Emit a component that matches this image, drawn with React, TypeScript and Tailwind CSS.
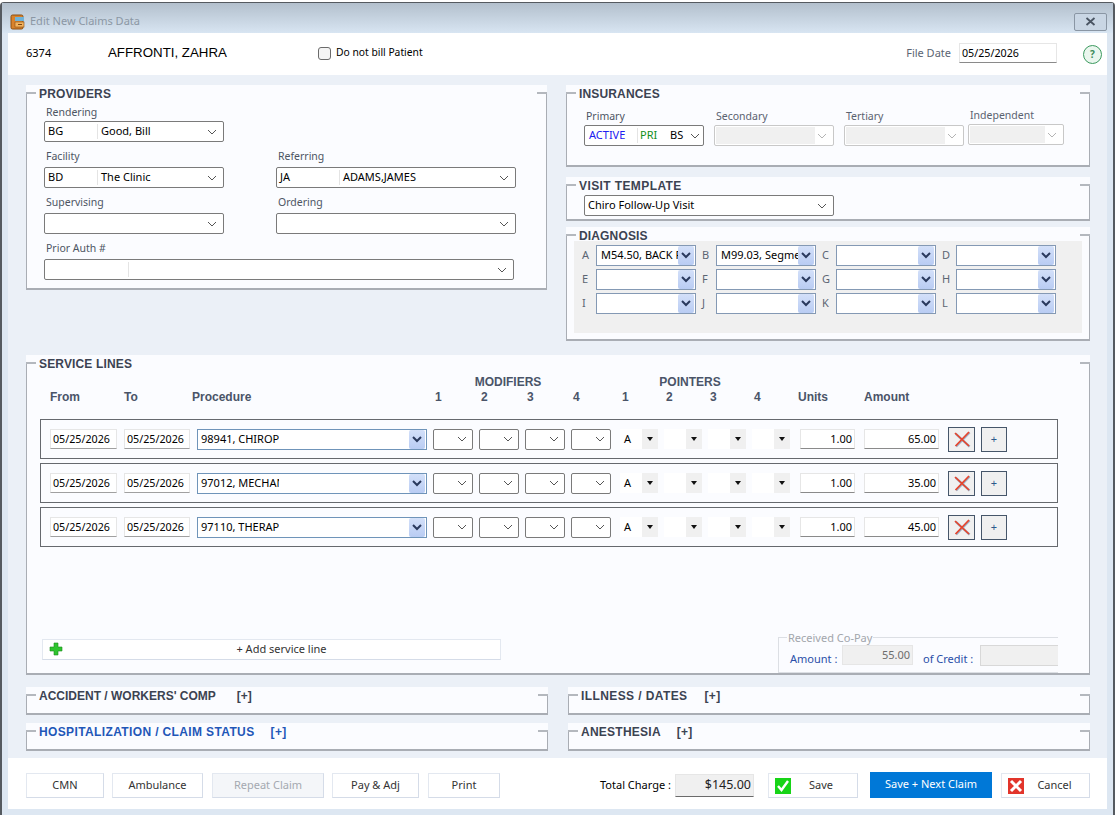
import React from 'react';

const FONT = 'font-["Noto_Sans",Arial,sans-serif]';
const BOLD = 'font-["Liberation_Sans",Arial,sans-serif]';

const Chevron = ({ muted }: { muted?: boolean }) => (
  <svg width="10" height="6" viewBox="0 0 10 6" className="shrink-0">
    <path d="M1 1l4 4 4-4" fill="none" stroke={muted ? '#b4b4b4' : '#555'} strokeWidth="1" />
  </svg>
);

const BlueArrow = () => (
  <div className="flex h-[19px] w-[16px] shrink-0 items-center justify-center rounded-[2px] bg-gradient-to-b from-[#d3e0f9] to-[#b9ccf3]">
    <svg width="10" height="7" viewBox="0 0 10 7">
      <path d="M1 1l4 4 4-4" fill="none" stroke="#2a3a5e" strokeWidth="2" />
    </svg>
  </div>
);

const Combo = ({ w, a, aw, b, disabled }: { w: string; a?: React.ReactNode; aw?: string; b?: string; disabled?: boolean }) => (
  <div className={`flex h-[21px] items-center rounded-[2px] border bg-white text-[11px] text-black ${w} ${disabled ? 'border-[#c8c8c8]' : 'border-[#7a7a7a]'}`}>
    {disabled ? (
      <div className="ml-[1px] h-[17px] flex-1 bg-[#f0f0f0]" />
    ) : (
      <>
        {aw && <div className={`h-[15px] shrink-0 truncate border-r border-[#e4e4e4] pl-[3px] leading-[13px] ${aw}`}>{a}</div>}
        <div className="h-[15px] flex-1 truncate pl-[3px] leading-[13px]">{b}</div>
      </>
    )}
    <div className="pr-[6px] pl-[2px]"><Chevron muted={disabled} /></div>
  </div>
);

const DiagCombo = ({ text }: { text?: string }) => (
  <div className="flex h-[21px] w-[100px] items-center border border-[#8499b4] bg-white pr-[1px] text-[11px] text-black">
    <div className="w-[82px] overflow-hidden whitespace-nowrap pl-[4px]">{text}</div>
    <div className="ml-auto"><BlueArrow /></div>
  </div>
);

const Group = ({ title, className, titleClass, children, plus, plusGap }: { title: string; className: string; titleClass?: string; children?: React.ReactNode; plus?: boolean; plusGap?: string }) => (
  <div className={`relative bg-[#fbfcff] ${className}`}>
    <div className="pointer-events-none absolute inset-x-0 bottom-0 top-[8px] border-x border-b-2 border-[#a9adb4]" />
    <div className="pointer-events-none absolute left-0 top-[7px] h-[2px] w-[10px] bg-[#b4b8be]" />
    <div className="pointer-events-none absolute right-0 top-[7px] h-[2px] w-[10px] bg-[#b4b8be]" />
    <div className={`relative flex items-center whitespace-nowrap pl-[13px] pt-[1px] text-[12px] font-bold leading-[16px] ${BOLD} ${titleClass ?? 'tracking-[0.15px] text-[#3c4352]'}`}>
      <span>{title}</span>
      {plus && <span className={plusGap}>[+]</span>}
    </div>
    {children}
  </div>
);

const Label = ({ children, className }: { children: React.ReactNode; className?: string }) => (
  <div className={`text-[10.5px] leading-[14px] text-[#4d5563] ${className ?? ''}`}>{children}</div>
);

const DateBox = ({ w }: { w: string }) => (
  <div className={`flex h-[20px] items-center border border-[#e6e6e6] border-b-[#a0a0a0] bg-white pl-[2px] text-[10.7px] text-black ${w}`}>05/25/2026</div>
);

const ModCombo = () => (
  <div className="flex h-[21px] w-[40px] items-center justify-end rounded-[2px] border border-[#7a7a7a] bg-white pr-[5px]">
    <Chevron />
  </div>
);

const Pointer = ({ v }: { v?: string }) => (
  <div className="flex h-[20px] w-[38px] items-center bg-white text-[11px] text-black">
    <div className="flex-1 pl-[4px]">{v}</div>
    <div className="flex h-[20px] w-[16px] items-center justify-center bg-[#f0f0f0]">
      <svg width="6" height="4" viewBox="0 0 6 4"><path d="M0 0h6L3 4z" fill="#111" /></svg>
    </div>
  </div>
);

const RedX = () => (
  <svg width="18" height="18" viewBox="0 0 18 18">
    <path d="M2 3l14 13M16 2L2.5 16" stroke="#4b6b96" strokeWidth="2.2" opacity="0.5" transform="translate(0.6 0.6)" />
    <path d="M2 3l14 13M16 2L2.5 16" stroke="#e8432a" strokeWidth="1.7" />
  </svg>
);

const ServiceRow = ({ proc, units, amount }: { proc: string; units: string; amount: string }) => (
  <div className="flex h-[40px] items-center border border-[#66696e] pl-[9px]">
    <DateBox w="w-[67px]" />
    <div className="ml-[7px]"><DateBox w="w-[66px]" /></div>
    <div className="ml-[7px] flex h-[21px] w-[230px] items-center border border-[#6f94b9] bg-white pr-[1px] text-[11px] text-black">
      <div className="w-[81px] overflow-hidden whitespace-nowrap pl-[3px]">{proc}</div>
      <div className="ml-auto"><BlueArrow /></div>
    </div>
    <div className="ml-[6px] flex gap-[6px]"><ModCombo /><ModCombo /><ModCombo /><ModCombo /></div>
    <div className="ml-[9px] flex gap-[6px]"><Pointer v="A" /><Pointer /><Pointer /><Pointer /></div>
    <div className="ml-[10px] flex h-[20px] w-[55px] items-center justify-end border border-[#e6e6e6] border-b-[#8a8a8a] bg-white pr-[2px] text-[11px] text-black">{units}</div>
    <div className="ml-[9px] flex h-[20px] w-[75px] items-center justify-end border border-[#e6e6e6] border-b-[#8a8a8a] bg-white pr-[2px] text-[11px] text-black">{amount}</div>
    <div className="ml-[9px] flex h-[25px] w-[27px] items-center justify-center border border-[#46566a] bg-[#f0f0f0]"><RedX /></div>
    <div className="ml-[6px] flex h-[25px] w-[26px] items-center justify-center border border-[#46566a] bg-[#f0f0f0] text-[11px] text-[#2c5a8c]">+</div>
  </div>
);

const FootBtn = ({ w, children, disabled }: { w: string; children: React.ReactNode; disabled?: boolean }) => (
  <div className={`flex h-[25px] items-center justify-center border border-[#e3e8f0] border-b-[#d5dce8] border-r-[#d5dce8] text-[11px] ${w} ${disabled ? 'bg-[#f4f6f9] text-[#a4a9b0]' : 'bg-white text-[#333]'}`}>{children}</div>
);

export default function App() {
  const diag = [
    ['A', 'M54.50, BACK PAIN', 'B', 'M99.03, Segmental', 'C', '', 'D', ''],
    ['E', '', 'F', '', 'G', '', 'H', ''],
    ['I', '', 'J', '', 'K', '', 'L', ''],
  ];
  return (
    <div className={`h-[815px] w-[1115px] overflow-hidden bg-white pt-[2px] ${FONT}`}>
      <div className="flex h-[813px] flex-col rounded-t-[4px] border-x-2 border-t border-[#555a60] border-b-0 bg-[#dde7f2] pb-[6px]">
        {/* title bar */}
        <div className="flex h-[30px] shrink-0 items-center bg-gradient-to-b from-[#b3c0cd] to-[#d8e5f2] pl-[8px] pr-[6px] pt-[7px]">
          <svg width="15" height="16" viewBox="0 0 15 16" className="shrink-0">
            <rect x="1" y="1" width="12" height="14" rx="1.5" fill="#d9822b" stroke="#8a4f12" />
            <rect x="5" y="3" width="9" height="4" fill="#6fb3d9" />
            <rect x="5" y="8" width="9" height="5" fill="#f2b35e" stroke="#8a4f12" strokeWidth="0.6" />
            <rect x="8" y="10" width="4" height="1" fill="#7a4510" />
          </svg>
          <span className="ml-[5px] text-[11px] text-[#8b97a4]">Edit New Claims Data</span>
          <div className="ml-auto flex h-[18px] w-[33px] items-center justify-center rounded-[2px] border border-[#8a96a4] bg-[#c9d6e4]">
            <svg width="11" height="9" viewBox="0 0 11 9"><path d="M1.5 1l8 7M9.5 1l-8 7" stroke="#4a5563" strokeWidth="1.8" fill="none" /></svg>
          </div>
        </div>

        <div className="mx-[6px] flex flex-1 flex-col">
          {/* patient header */}
          <div className="flex h-[42px] shrink-0 items-center bg-white pb-[2px] pl-[18px] pr-[5px] text-black">
            <span className="w-[82px] text-[11px]">6374</span>
            <span className={`w-[210px] text-[13.3px] leading-[16px] ${BOLD}`}>AFFRONTI, ZAHRA</span>
            <span className="h-[13px] w-[13px] rounded-[3px] border border-[#6b6b6b] bg-[#f4f4f4]" />
            <span className="ml-[5px] text-[10.3px]">Do not bill Patient</span>
            <span className="ml-auto text-[11px] text-[#5b6573]">File Date</span>
            <div className="ml-[8px] flex h-[20px] w-[98px] items-center border border-[#e6e6e6] border-b-[#8a8a8a] pl-[2px] text-[10.7px]">05/25/2026</div>
            <div className="ml-[26px] mt-[2px] flex h-[19px] w-[19px] items-center justify-center rounded-full border border-[#3c9a5f] bg-[#eaf6ee] text-[10px] font-bold text-[#3c8a5a]">?</div>
          </div>

          {/* form body */}
          <div className="flex flex-1 flex-col bg-[#ebf0f7] pl-[18px] pr-[17px] pt-[10px]">
            <div className="flex h-[256px] justify-between">
              <Group title="PROVIDERS" className="h-[205px] w-[521px]">
                <div className="flex flex-col gap-[3px] pl-[18px] pt-[3px]">
                  <div>
                    <Label className="pl-[2px]">Rendering</Label>
                    <div className="mt-[2px]"><Combo w="w-[180px]" a="BG" aw="w-[53px]" b="Good, Bill" /></div>
                  </div>
                  <div className="mt-[4px] flex gap-[52px]">
                    <div>
                      <Label className="pl-[2px]">Facility</Label>
                      <div className="mt-[4px]"><Combo w="w-[180px]" a="BD" aw="w-[53px]" b="The Clinic" /></div>
                    </div>
                    <div>
                      <Label className="pl-[2px]">Referring</Label>
                      <div className="mt-[4px]"><Combo w="w-[240px]" a="JA" aw="w-[63px]" b="ADAMS,JAMES" /></div>
                    </div>
                  </div>
                  <div className="mt-[4px] flex gap-[52px]">
                    <div>
                      <Label className="pl-[2px]">Supervising</Label>
                      <div className="mt-[4px]"><Combo w="w-[180px]" /></div>
                    </div>
                    <div>
                      <Label className="pl-[2px]">Ordering</Label>
                      <div className="mt-[4px]"><Combo w="w-[240px]" /></div>
                    </div>
                  </div>
                  <div className="mt-[4px]">
                    <Label className="pl-[2px]">Prior Auth #</Label>
                    <div className="mt-[4px]"><Combo w="w-[470px]" aw="w-[84px]" /></div>
                  </div>
                </div>
              </Group>

              <div className="flex w-[524px] flex-col">
                <Group title="INSURANCES" className="h-[82px]">
                  <div className="flex pl-[18px] pt-[7px]">
                    <div className="w-[130px]">
                      <Label className="pl-[2px]">Primary</Label>
                      <div className="mt-[2px] flex h-[21px] w-[120px] items-center rounded-[2px] border border-[#7a7a7a] bg-white text-[11px]">
                        <span className="h-[15px] w-[53px] border-r border-[#e4e4e4] pl-[4px] leading-[13px] text-[#2020f0]">ACTIVE</span>
                        <span className="h-[15px] w-[32px] pl-[2px] leading-[13px] text-[#12901a]">PRI</span>
                        <span className="h-[15px] leading-[13px] text-black">BS</span>
                        <div className="ml-auto pr-[3px]"><Chevron /></div>
                      </div>
                    </div>
                    <div className="w-[130px]">
                      <Label className="pl-[2px] text-[#5a6270]">Secondary</Label>
                      <div className="mt-[2px]"><Combo w="w-[120px]" disabled /></div>
                    </div>
                    <div className="w-[124px]">
                      <Label className="pl-[2px] text-[#5a6270]">Tertiary</Label>
                      <div className="mt-[2px]"><Combo w="w-[120px]" disabled /></div>
                    </div>
                    <div className="w-[96px]">
                      <Label className="-mt-[1px] mb-[1px] pl-[2px] text-[#5a6270]">Independent</Label>
                      <div className="mt-[2px]"><Combo w="w-[96px]" disabled /></div>
                    </div>
                  </div>
                </Group>
                <Group title="VISIT TEMPLATE" className="mt-[10px] h-[44px]" titleClass="tracking-[0.4px] text-[#3c4352]">
                  <div className="pl-[18px] pt-[1px]"><Combo w="w-[250px]" b="Chiro Follow-Up Visit" /></div>
                </Group>
                <Group title="DIAGNOSIS" className="mt-[6px] h-[114px]">
                  <div className="mx-[8px] mt-[-3px] grid h-[92px] grid-cols-[repeat(4,20px_100px)] content-start gap-y-[3px] bg-[#f0f0f0] pl-[2px] pt-[4px]">
                    {diag.flat().map((v, i) =>
                      i % 2 === 0 ? (
                        <div key={i} className="flex items-center pl-[6px] text-[11px] text-[#5b6573]">{v}</div>
                      ) : (
                        <DiagCombo key={i} text={v} />
                      )
                    )}
                  </div>
                </Group>
              </div>
            </div>

            {/* service lines */}
            <Group title="SERVICE LINES" className="mt-[14px] flex h-[320px] flex-col">
              <div className={`flex h-[16px] items-center pt-[3px] text-[12px] font-bold text-[#4a5468] ${BOLD}`}>
                <div className="ml-[407px] w-[150px] text-center">MODIFIERS</div>
                <div className="ml-[34px] w-[146px] text-center">POINTERS</div>
              </div>
              <div className={`flex h-[18px] items-center pl-[24px] text-[12px] font-bold text-[#4a5468] ${BOLD}`}>
                <div className="w-[74px]">From</div>
                <div className="w-[68px]">To</div>
                <div className="w-[241px]">Procedure</div>
                <div className="w-[46px] pl-[2px]">1</div>
                <div className="w-[46px] pl-[2px]">2</div>
                <div className="w-[46px] pl-[2px]">3</div>
                <div className="w-[46px] pl-[2px]">4</div>
                <div className="w-[44px] pl-[5px]">1</div>
                <div className="w-[44px] pl-[5px]">2</div>
                <div className="w-[44px] pl-[5px]">3</div>
                <div className="w-[49px] pl-[5px]">4</div>
                <div className="w-[66px]">Units</div>
                <div>Amount</div>
              </div>
              <div className="ml-[14px] mt-[13px] flex w-[1018px] flex-col gap-[4px]">
                <ServiceRow proc="98941, CHIROPRACTIC" units="1.00" amount="65.00" />
                <ServiceRow proc="97012, MECHANICAL" units="1.00" amount="35.00" />
                <ServiceRow proc="97110, THERAPEUTIC" units="1.00" amount="45.00" />
              </div>
              <div className="mt-auto flex items-end justify-between pb-[2px] pl-[16px] pr-[32px]">
                <div className="relative mb-[13px] flex h-[21px] w-[459px] items-center justify-center border border-[#e3e8f0] border-b-[#d5dce8] bg-white pl-[20px] text-[11px] text-[#333]">
                  <svg width="14" height="14" viewBox="0 0 14 14" className="absolute left-[6px] top-[2px]">
                    <path d="M5 1h4v4h4v4H9v4H5V9H1V5h4z" fill="#2fc42f" stroke="#1d8f1d" strokeWidth="0.6" />
                  </svg>
                  + Add service line
                </div>
                <div className="relative flex h-[36px] w-[280px] items-center border-y border-l border-[#dcdfe4] pl-[11px] text-[11px]">
                  <span className="absolute -top-[7px] left-[8px] bg-[#fbfcff] px-[1px] leading-[13px] text-[#a2a6ac]">Received Co-Pay</span>
                  <span className="mt-[8px] w-[52px] text-[#2a4fa8]">Amount :</span>
                  <div className="flex h-[20px] w-[71px] items-center justify-end border border-[#e6e6e6] bg-[#f0f0f0] pr-[2px] text-[#6d6d6d]">55.00</div>
                  <span className="ml-[10px] mt-[8px] w-[57px] text-[#2a4fa8]">of Credit :</span>
                  <div className="h-[21px] flex-1 border border-r-0 border-[#d8d8d8] bg-[#f0f0f0]" />
                </div>
              </div>
            </Group>

            {/* collapsed sections */}
            <div className="mt-[12px] flex justify-between">
              <div className="flex w-[522px] flex-col gap-[8px]">
                <Group title="ACCIDENT / WORKERS' COMP" className="h-[28px]" titleClass="text-[#3c4352]" plus plusGap="ml-[21px]" />
                <Group title="HOSPITALIZATION / CLAIM STATUS" className="h-[28px]" titleClass="tracking-[0.37px] text-[#1f57b8]" plus plusGap="ml-[16px]" />
              </div>
              <div className="flex w-[522px] flex-col gap-[8px]">
                <Group title="ILLNESS / DATES" className="h-[28px]" titleClass="tracking-[0.4px] text-[#3c4352]" plus plusGap="ml-[17px]" />
                <Group title="ANESTHESIA" className="h-[28px]" titleClass="tracking-[0.25px] text-[#3c4352]" plus plusGap="ml-[16px]" />
              </div>
            </div>
          </div>

          {/* footer */}
          <div className="flex h-[51px] shrink-0 items-center bg-white pl-[18px] pr-[17px] pt-[3px]">
            <div className="flex gap-[8px]">
              <FootBtn w="w-[78px]">CMN</FootBtn>
              <FootBtn w="w-[91px]">Ambulance</FootBtn>
              <FootBtn w="ml-[1px] w-[112px]" disabled>Repeat Claim</FootBtn>
              <FootBtn w="w-[87px]">Pay &amp; Adj</FootBtn>
              <FootBtn w="ml-[1px] w-[72px]">Print</FootBtn>
            </div>
            <span className="ml-auto text-[11px] text-black">Total Charge :</span>
            <div className="ml-[4px] flex h-[23px] w-[79px] items-center justify-end border border-[#e6e6e6] border-b-[#6b6b6b] bg-[#f0f0f0] pr-[2px] text-[12.5px] text-[#222]">$145.00</div>
            <div className="ml-[14px]">
              <FootBtn w="w-[90px] relative">
                <svg width="16" height="16" viewBox="0 0 16 16" className="absolute left-[6px] top-[4px]">
                  <rect width="16" height="16" fill="#17d417" />
                  <path d="M3 8l3.5 4L13 3" stroke="#fff" strokeWidth="2.4" fill="none" />
                </svg>
                <span className="pl-[16px]">Save</span>
              </FootBtn>
            </div>
            <div className="ml-[12px] -mt-[1px] flex h-[26px] w-[122px] items-center justify-center bg-[#0078d7] text-[11px] text-white">Save + Next Claim</div>
            <div className="ml-[9px]">
              <FootBtn w="w-[89px] relative">
                <svg width="16" height="16" viewBox="0 0 16 16" className="absolute left-[6px] top-[4px]">
                  <rect width="16" height="16" fill="#e2352b" />
                  <path d="M3 3l10 10M13 3L3 13" stroke="#fff" strokeWidth="3" />
                </svg>
                <span className="pl-[18px]">Cancel</span>
              </FootBtn>
            </div>
          </div>
        </div>
      </div>
    </div>
  );
}
